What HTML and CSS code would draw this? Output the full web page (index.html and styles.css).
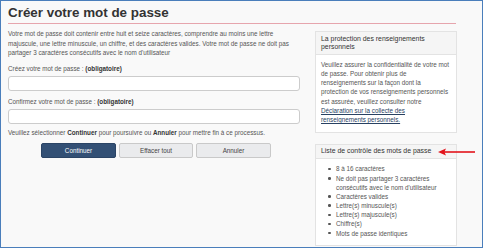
FILE: index.html
```html
<!DOCTYPE html>
<html lang="fr">
<head>
    <meta charset="utf-8">
    <title>Créer votre mot de passe</title>
    <link rel="stylesheet" href="styles.css">
</head>
<body>
    <div class="frame">
        <main class="page">
            <h1 class="page-title">Créer votre mot de passe</h1>

            <div class="columns">
                <div class="main-col">
                    <p class="intro">Votre mot de passe doit contenir entre huit et seize caractères, comprendre au moins une lettre majuscule, une lettre minuscule, un chiffre, et des caractères valides. Votre mot de passe ne doit pas partager 3 caractères consécutifs avec le nom d'utilisateur</p>

                    <form class="pw-form" action="#" method="post">
                        <div class="form-group first">
                            <label for="password">Créez votre mot de passe : <strong>(obligatoire)</strong></label>
                            <input type="password" id="password" name="password">
                        </div>
                        <div class="form-group">
                            <label for="confirm-password">Confirmez votre mot de passe : <strong>(obligatoire)</strong></label>
                            <input type="password" id="confirm-password" name="confirm_password">
                        </div>

                        <p class="note">Veuillez sélectionner <strong>Continuer</strong> pour poursuivre ou <strong>Annuler</strong> pour mettre fin à ce processus.</p>

                        <div class="buttons">
                            <button type="submit" class="btn btn-primary">Continuer</button>
                            <button type="reset" class="btn">Effacer tout</button>
                            <button type="button" class="btn">Annuler</button>
                        </div>
                    </form>
                </div>

                <aside class="side-col">
                    <section class="panel">
                        <h2 class="panel-heading">La protection des renseignements personnels</h2>
                        <div class="panel-body">
                            <p>Veuillez assurer la confidentialité de votre mot de passe. Pour obtenir plus de renseignements sur la façon dont la protection&nbsp;de vos renseignements personnels est assurée, veuillez consulter notre <a href="#">Déclaration sur la collecte des renseignements&nbsp;personnels.</a></p>
                        </div>
                    </section>

                    <section class="panel panel-checklist">
                        <h2 class="panel-heading">
                            Liste de contrôle des mots de passe
                            <!-- red pointer arrow -->
                            <svg class="pointer" width="37" height="8" viewBox="0 0 37 8">
                                <line x1="6" y1="4" x2="37" y2="4" stroke="#e3141c" stroke-width="1.6"/>
                                <polygon points="0,4 8,0.6 6.4,4 8,7.4" fill="#e3141c"/>
                            </svg>
                        </h2>
                        <div class="panel-body">
                            <ul class="checklist">
                                <li>8 à 16 caractères</li>
                                <li>Ne doit pas partager 3 caractères consécutifs avec le nom d'utilisateur</li>
                                <li>Caractères valides</li>
                                <li>Lettre(s) minuscule(s)</li>
                                <li>Lettre(s) majuscule(s)</li>
                                <li>Chiffre(s)</li>
                                <li>Mots de passe identiques</li>
                            </ul>
                        </div>
                    </section>
                </aside>
            </div>
        </main>
    </div>
</body>
</html>
```

FILE: styles.css
```css
html, body {
    margin: 0;
    padding: 0;
}

body {
    font-family: "Liberation Sans", Arial, sans-serif;
    background-color: #f9f9f9;
    color: #555;
}

.frame {
    width: 483px;
    height: 248px;
    box-sizing: border-box;  /* border inside the window */
    border: 1px solid #4a7ebb;
    padding: 0 26px 0 7px;
    overflow: hidden;
    background-color: #f9f9f9;
}

.page-title {
    margin: 0;
    padding: 2px 0 1px;
    font-size: 13.4px;
    line-height: 19px;
    font-weight: bold;
    color: #333;
    border-bottom: 1px solid #e6a5ad;
}

.columns {
    display: grid;
    grid-template-columns: 292px 142px;
    column-gap: 15px;
    margin-top: 5px;
    align-items: start;
}

/* Left column */

.intro,
.note {
    margin: 0;
    font-size: 6.3px;
    line-height: 9.5px;
}

.pw-form {
    margin: 0;
}

.form-group {
    margin-top: 6.5px;
}

.form-group.first {
    margin-top: 6.75px;
}

label {
    display: block;
    font-size: 6.3px;
    line-height: 9.5px;
    color: #555;
}

label strong {
    color: #333;
}

input[type="password"] {
    display: block;
    width: 100%;
    height: 15px;
    margin-top: 2px;
    padding: 0 4px;
    border: 1px solid #ccc;
    border-radius: 3px;
    background-color: white;
    box-sizing: border-box;  /* Include padding in width */
}

.note {
    margin-top: 4.5px;
}

.note strong {
    color: #333;
}

.buttons {
    display: flex;
    justify-content: center;
    gap: 3px;
    margin-top: 5.5px;
    padding-left: 4px;
}

.btn {
    width: 74.5px;
    height: 15px;
    padding: 0;
    border: 1px solid #c9c9c9;
    border-radius: 2px;
    background-color: #eaebed;
    color: #444;
    font-family: inherit;
    font-size: 6.3px;
    cursor: pointer;
}

.btn-primary {
    background-color: #335075;
    border-color: #2b4465;
    color: white;
}

/* Right column */

.side-col {
    margin-top: 2px;
}

.panel {
    border: 1px solid #e3e3e3;
    background-color: white;
}

.panel + .panel {
    margin-top: 11px;
}

.panel-heading {
    position: relative;
    margin: 0;
    padding: 2.5px 5px 3px;
    font-size: 6.9px;
    line-height: 8.3px;
    font-weight: normal;
    color: #333;
    background-color: #f5f5f5;
    border-bottom: 1px solid #e3e3e3;
}

.pointer {
    position: absolute;
    left: 122px;
    top: 50%;
    transform: translateY(-50%);
}

.panel-body {
    padding: 4.5px 5.5px 7px 5px;
    font-size: 6.3px;
    line-height: 9.3px;
}

.panel-body p {
    margin: 0;
}

.panel-body a {
    color: #284162;
    text-decoration: underline;
}

.panel-checklist .panel-body {
    padding-top: 5px;
}

.checklist {
    margin: 0;
    padding: 0 0 0 7px;
    list-style: none;
    line-height: 9.15px;
}

.checklist li {
    display: flex;
    gap: 5.4px;
}

.checklist li::before {
    content: "";
    flex-shrink: 0;
    width: 2.6px;
    height: 2.6px;
    margin-top: 3.3px;
    border-radius: 50%;
    background-color: #555;
}
```
